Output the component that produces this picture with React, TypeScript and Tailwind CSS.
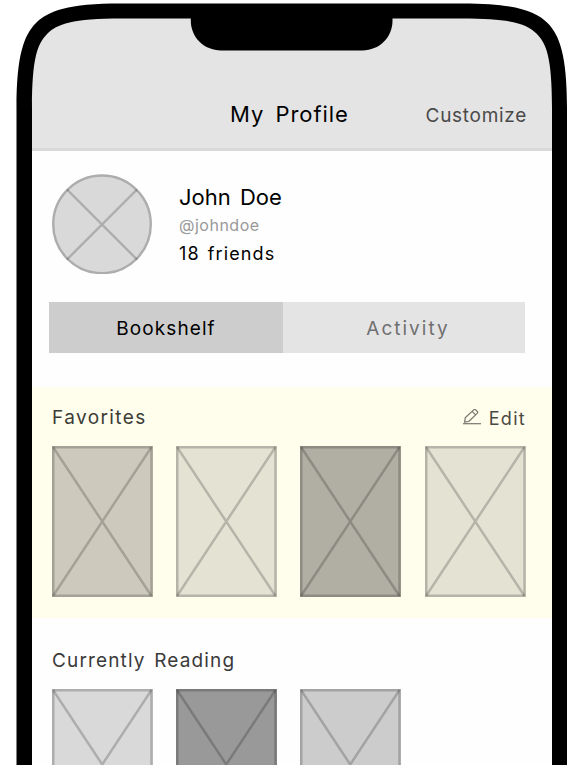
type BookProps = { fill: string };

function Book({ fill }: BookProps) {
  return (
    <svg viewBox="0 0 101 151" className={`block h-[151px] w-[101px] shrink-0 ${fill}`}>
      <rect x="1.25" y="1.25" width="98.25" height="148.5" fill="none" stroke="#000" strokeOpacity="0.2" strokeWidth="2.5" />
      <path d="M1 1l98.5 149M99.5 1L1 150" fill="none" stroke="#000" strokeOpacity="0.2" strokeWidth="2.5" />
    </svg>
  );
}

function Avatar() {
  return (
    <svg viewBox="0 0 100 100" className="block size-[100px] shrink-0">
      <circle cx="50" cy="50.3" r="48.8" fill="#d9d9d9" stroke="#adadad" strokeWidth="2.4" />
      <path d="M15 15.500l70 70M85 15.500l-70 70" stroke="#000" strokeOpacity="0.2" strokeWidth="2.4" />
    </svg>
  );
}

function PencilIcon() {
  return (
    <svg viewBox="0 0 18 18" className="block size-[18px]" fill="none" stroke="#777770" strokeWidth="1.2" strokeLinejoin="round">
      <path d="M2.200 8.800L10.700.900Q11.700 0 12.700.900L14.300 2.500Q15.100 3.400 14.200 4.300L5.700 12.500L1.600 13.100ZM9.200 2.400L12.600 5.800" />
      <path d="M0 14.700H18" />
    </svg>
  );
}

function DeviceFrame() {
  return (
    <svg viewBox="0 0 584 765" className="pointer-events-none absolute inset-0 h-[765px] w-[584px]">
      <path
        fill="#fff"
        fillRule="evenodd"
        d="M0 0H584V765H0ZM16.500 765V108C16.500 55 24 35 36 23C48 11 68 3.500 121 3.500H462.500C515.500 3.500 535.500 11 547.500 23C559.500 35 567 55 567 108V765Z"
      />
      <path
        fill="#000"
        fillRule="evenodd"
        d="M16.500 765V108C16.500 55 24 35 36 23C48 11 68 3.500 121 3.500H462.500C515.500 3.500 535.500 11 547.500 23C559.500 35 567 55 567 108V765ZM32 765H552V108C552 58 546.500 43.600 536.700 33.800C526.900 24 512 18.500 462 18.500H122C72 18.500 57.100 24 47.300 33.800C37.500 43.600 32 58 32 108Z"
      />
      <path d="M190.800 18V20.500C190.800 37.500 204 50.400 221 50.400H362.300C379.300 50.400 392.500 37.500 392.500 20.500V18Z" fill="#000" />
    </svg>
  );
}

export default function App() {
  return (
    <div className="relative h-[765px] w-[584px] overflow-hidden bg-white font-['Inter','Liberation_Sans',sans-serif]">
      <div className="mx-auto flex h-full w-[520px] flex-col bg-[#fefefe] pt-4 whitespace-nowrap">
        <header className="grid h-[135px] shrink-0 grid-cols-[1fr_auto_1fr] items-end border-b-3 border-[#d9d9d9] bg-[#e4e4e4] pr-[25px] pb-[19px]">
          <h1 className="col-start-2 ml-[20px] text-[22px] leading-[30px] tracking-[0.95px] text-black [word-spacing:4px]">My Profile</h1>
          <span className="text-right text-[19px] leading-[26px] tracking-[0.7px] text-[#4a4a4a]">Customize</span>
        </header>

        <section className="mt-[23px] flex h-[101px] shrink-0 gap-[27px] pl-5">
          <Avatar />
          <div className="pt-2">
            <h2 className="text-[22px] leading-[30px] tracking-[0px] text-black [word-spacing:3px]">John Doe</h2>
            <p className="mt-px text-[16px] leading-[24px] tracking-[0.5px] text-[#999]">@johndoe</p>
            <p className="mt-[2px] text-[18px] leading-[30px] tracking-[1.1px] text-black [word-spacing:2px]">18 friends</p>
          </div>
        </section>

        <nav className="mt-[27px] ml-[17px] flex h-[51px] w-[476px] shrink-0 text-[19px]">
          <span className="flex w-[234px] items-center justify-center bg-[#cdcdcd] pt-[3px] tracking-[1.1px] text-black">Bookshelf</span>
          <span className="flex flex-1 items-center justify-center bg-[#e4e4e4] pt-[3px] pl-[8px] tracking-[2px] text-[#707070]">Activity</span>
        </nav>

        <section className="mt-[34px] h-[231px] shrink-0 bg-[#fffdeb] px-5 pt-4">
          <div className="flex h-[30px] items-center justify-between pr-[6px]">
            <h2 className="text-[19px] tracking-[1.4px] text-[#3b3b37]">Favorites</h2>
            <span className="flex items-center gap-2 text-[18px] tracking-[1.3px] text-[#4a4a45]">
              <PencilIcon />
              <span>Edit</span>
            </span>
          </div>
          <div className="mt-[13px] flex gap-[23.2px]">
            <Book fill="bg-[#cdcabd]" />
            <Book fill="bg-[#e4e2d3]" />
            <Book fill="bg-[#b1afa3]" />
            <Book fill="bg-[#e4e2d3]" />
          </div>
        </section>

        <section className="shrink-0 px-5 pt-7">
          <h2 className="h-[30px] text-[19px] leading-[30px] tracking-[1.15px] text-[#3a3a3a] [word-spacing:2px]">Currently Reading</h2>
          <div className="mt-[13px] flex gap-[23.2px]">
            <Book fill="bg-[#d9d9d9]" />
            <Book fill="bg-[#999]" />
            <Book fill="bg-[#ccc]" />
          </div>
        </section>
      </div>
      <DeviceFrame />
    </div>
  );
}
